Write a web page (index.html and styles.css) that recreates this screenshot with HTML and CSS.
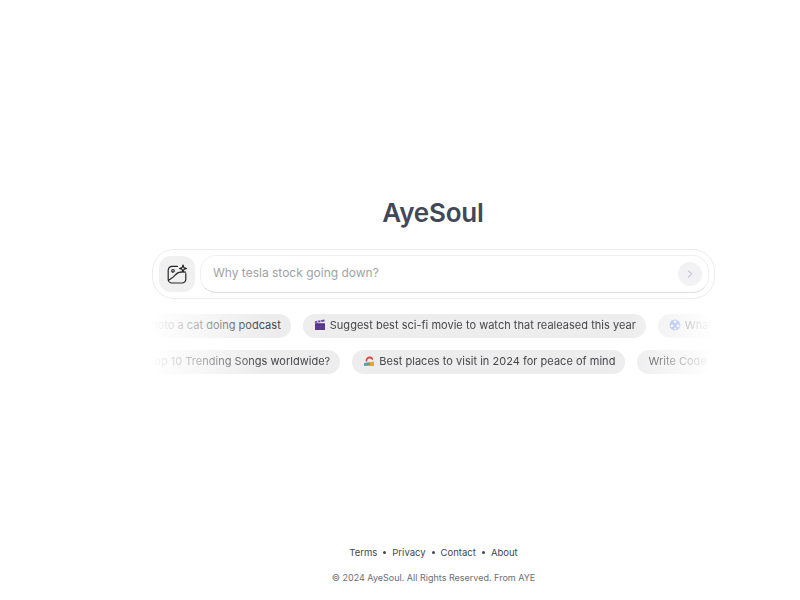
FILE: index.html
```html
<!DOCTYPE html>
<html lang="en">
<head>
    <meta charset="UTF-8">
    <meta name="viewport" content="width=device-width, initial-scale=1.0">
    <title>AyeSoul</title>
    <link rel="stylesheet" href="styles.css">
</head>
<body>
    <main class="main">
        <h1 class="logo">AyeSoul</h1>

        <div class="search">
            <button class="image-button" aria-label="Search with image">
                <svg width="22" height="22" viewBox="0 0 22 22" fill="none" stroke="#27272a" stroke-width="1.200" stroke-linecap="round" stroke-linejoin="round">
                    <path d="M11.500 3.400H6A3.800 3.800 0 0 0 2.200 7.200v9A3.800 3.800 0 0 0 6 20h10a3.800 3.800 0 0 0 3.800-3.800V10.500"/>
                    <circle cx="7" cy="7.800" r="1.300"/>
                    <path d="M2.400 17.500c3-2.200 5-3.200 7-5.700 2-2.400 5.500-3.500 10.200-2.600"/>
                    <path d="M17 2l.9 2.600 2.600.9-2.600.9-.9 2.600-.9-2.600-2.600-.9 2.600-.9z"/>
                </svg>
            </button>
            <div class="input-box">
                <input class="input" type="text" placeholder="Why tesla stock going down?">
                <button class="send-button" aria-label="Send">
                    <svg width="10" height="10" viewBox="0 0 10 10" fill="none" stroke="#c4c6cc" stroke-width="1.100" stroke-linecap="round" stroke-linejoin="round">
                        <path d="M3.500 1.800L6.700 5 3.500 8.200"/>
                    </svg>
                </button>
            </div>
        </div>

        <div class="suggestions">
            <div class="row row-one">
                <a class="chip">Generate a photo a cat doing podcast</a>
                <a class="chip">
                    <svg class="emoji" viewBox="0 0 12 12">
                        <path fill="#5c3a8e" d="M1 4.500h10V11H1z"/>
                        <path fill="#4a2c78" d="M1 4.500h10v1.200H1z"/>
                        <path fill="#6d4aa3" d="M.8 2.200L10.400.6l.3 1.800-9.600 1.600z"/>
                        <path fill="#e8e4f0" d="M3 1.900l.9-.2.7 1.500-.9.2zM6 1.400l.9-.2.7 1.500-.9.2z"/>
                    </svg>
                    Suggest best sci-fi movie to watch that realeased this year
                </a>
                <a class="chip">
                    <svg class="emoji" viewBox="0 0 12 12">
                        <circle cx="6" cy="6" r="5.400" fill="#7d9cf0"/>
                        <circle cx="6" cy="2.800" r="1.300" fill="#fff"/>
                        <circle cx="3" cy="6.800" r="1.300" fill="#fff"/>
                        <circle cx="9" cy="6.800" r="1.300" fill="#fff"/>
                        <circle cx="6" cy="9.600" r="1" fill="#fff"/>
                    </svg>
                    What's the latest news
                </a>
            </div>
            <div class="row row-two">
                <a class="chip">Top 10 Trending Songs worldwide?</a>
                <a class="chip">
                    <svg class="emoji" viewBox="0 0 12 12">
                        <path fill="#e8a33d" d="M1 8l10-1.500V11H1z"/>
                        <path fill="#3fa7c4" d="M1 8.200l5-.8 1.500 2L1 11z"/>
                        <path fill="#e2453c" d="M2.500 6.500C2.500 3 5 1 7.500 1.500 9.500 2 10.500 3.500 10 5L8.600 4.500C8 3.500 6.800 3 5.500 3.800 4.500 4.500 4.200 5.500 4.200 6.500z"/>
                    </svg>
                    Best places to visit in 2024 for peace of mind
                </a>
                <a class="chip">Write Code to build a website</a>
            </div>
        </div>

        <footer class="footer">
            <nav class="footer-links">
                <a>Terms</a>
                <span class="dot"></span>
                <a>Privacy</a>
                <span class="dot"></span>
                <a>Contact</a>
                <span class="dot"></span>
                <a>About</a>
            </nav>
            <p class="copyright">© 2024 AyeSoul. All Rights Reserved. From AYE</p>
        </footer>
    </main>
</body>
</html>
```
FILE: styles.css
```css
body {
    font-family: Inter, "Noto Sans", sans-serif;
    margin: 0;
    padding: 0;
    background-color: #fff;
    height: 600px;
    overflow: hidden;
}
.main {
    width: 563px;
    height: 600px;
    margin-left: 152px;
    display: flex;
    flex-direction: column;
    align-items: center;
}
.logo {
    margin: 195px 1px 19px 0;
    font-size: 26px;
    line-height: 35px;
    font-weight: 600;
    letter-spacing: -0.2px;
    color: #414858;
}
.search {
    box-sizing: border-box;
    width: 100%;
    height: 50px;
    padding: 5px 5px 5px 6px;
    display: flex;
    align-items: center;
    gap: 5px;
    border: 1px solid #ececef;
    border-radius: 22px;
}
.image-button {
    width: 36px;
    height: 36px;
    flex-shrink: 0;
    padding: 0;
    border: none;
    border-radius: 12px;
    background-color: #f0f0f0;
    display: flex;
    justify-content: center;
    align-items: center;
}
.input-box {
    flex: 1;
    height: 38px;
    box-sizing: border-box;
    display: flex;
    align-items: center;
    padding: 0 6px 0 12px;
    border: 1px solid #f0f0f2;
    border-bottom: 1px solid #dfdfe2;
    border-radius: 16px;
}
.input {
    flex: 1;
    border: none;
    outline: none;
    padding: 0 0 3px;
    font-family: inherit;
    font-size: 12px;
    background: transparent;
}
.input::placeholder {
    color: #a1a1a6;
    opacity: 1;
}
.send-button {
    width: 24px;
    height: 24px;
    padding: 0;
    border: none;
    border-radius: 50%;
    background-color: #f2f2f4;
    display: flex;
    justify-content: center;
    align-items: center;
}
.suggestions {
    width: 100%;
    margin-top: 15px;
    display: flex;
    flex-direction: column;
    gap: 12px;
    overflow: hidden;
    -webkit-mask-image: linear-gradient(to right, transparent 0, #000 110px, #000 480px, transparent 560px);
    mask-image: linear-gradient(to right, transparent 0, #000 110px, #000 480px, transparent 560px);
}
.row {
    display: flex;
    gap: 12px;
}
.row-one {
    margin-left: -79px;
}
.row-two {
    margin-left: -15px;
}
.chip {
    flex-shrink: 0;
    height: 24px;
    box-sizing: border-box;
    padding: 0 10px 2px 11px;
    display: flex;
    align-items: center;
    gap: 4px;
    white-space: nowrap;
    font-size: 11px;
    letter-spacing: 0.02px;
    color: #46464c;
    background-color: #ededed;
    border-radius: 12px;
}
.emoji {
    width: 12px;
    height: 12px;
    flex-shrink: 0;
}
.footer {
    margin-top: auto;
    padding-bottom: 17px;
    text-align: center;
}
.footer-links {
    display: flex;
    justify-content: center;
    align-items: center;
    gap: 5px;
    font-size: 9.500px;
    line-height: 11px;
    color: #3f4656;
}
.dot {
    width: 3px;
    height: 3px;
    margin: 0 1px;
    border-radius: 50%;
    background-color: #3f4656;
}
.copyright {
    margin: 14px 0 0;
    font-size: 9px;
    color: #6b6f76;
}
```
